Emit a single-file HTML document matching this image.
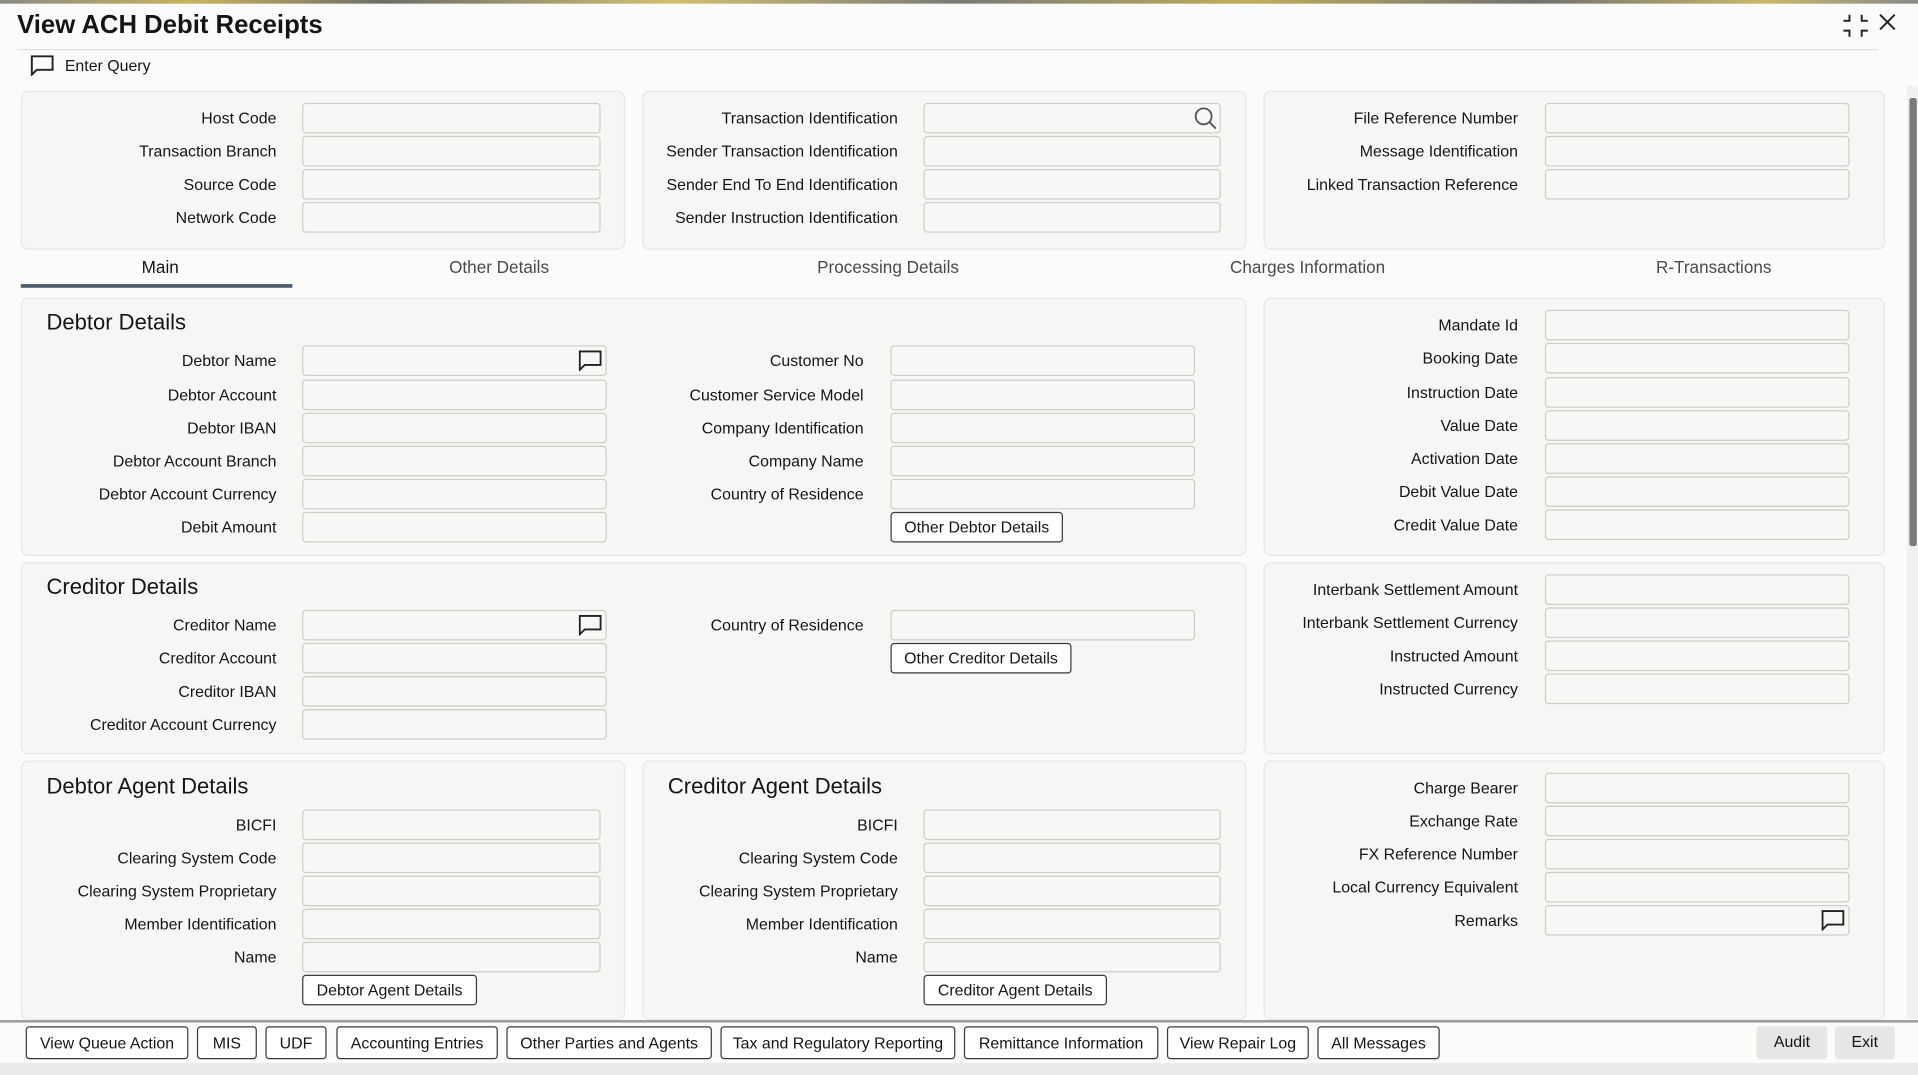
<!DOCTYPE html>
<html><head><meta charset="utf-8"><style>
html,body{margin:0;padding:0;width:1918px;height:1074px;overflow:hidden;background:#fbfbfa;}
#w{position:absolute;left:0;top:0;width:1568px;height:878px;transform:scale(1.2232,1.2246);transform-origin:0 0;font-family:"Liberation Sans Narrow","Liberation Sans",sans-serif;color:#161513;}
#w div{position:absolute;box-sizing:border-box;}
.p{background:#f7f6f4;border:1px solid #e9e7e3;border-radius:6px;}
.l{font-size:13px;text-align:right;width:300px;line-height:16px;}
.i{height:25px;border:1px solid #cfccc7;border-radius:3px;background:#f8f7f5;}
.h{font-size:18px;line-height:22px;}
.b{height:25px;border:1px solid #3a3a3a;border-radius:3px;background:#fff;font-size:13px;line-height:23px;text-align:center;}
.t{font-size:14px;line-height:18px;color:#4a4a48;text-align:center;width:200px;}
.fb{top:838px;height:27px;border:1px solid #3a3a3a;border-radius:3px;background:#fff;font-size:13px;line-height:25px;text-align:center;}
</style></head><body><div id="w">
<div style="left:0;top:0;width:1568px;height:3px;background:linear-gradient(90deg,#8a8a86,#c9b35a 10%,#6d6d69 20%,#d0c070 35%,#7a7a76 50%,#bfae5a 65%,#707070 80%,#c8b868 92%,#888)"></div>
<div style="left:14px;top:8px;font-size:21px;font-weight:bold;line-height:26px;">View ACH Debit Receipts</div>
<div style="left:1506px;top:11px;width:22px;height:20px;"><svg width="22" height="20" viewBox="0 0 22 20" fill="none" stroke="#222" stroke-width="1.6"><path d="M6 1v5H1M16 1v5h5M6 19v-5H1M16 19v-5h5"/></svg></div>
<div style="left:1536px;top:11px;"><svg width="14" height="14" viewBox="0 0 14 14" stroke="#222" stroke-width="1.6"><path d="M1 1L13 13M13 1L1 13"/></svg></div>
<div style="left:14px;top:40px;width:1521px;height:1px;background:#e2e0dc"></div>
<div style="left:25px;top:45px;"><svg width="19" height="17" viewBox="0 0 19 17" fill="none" stroke="#222" stroke-width="1.6"><path d="M1 1h17v11H5l-4 4z"/></svg></div>
<div style="left:53px;top:46px;font-size:13px;line-height:16px;">Enter Query</div>

<div class="p" style="left:17px;top:74px;width:494px;height:130px"></div>
<div class="p" style="left:525px;top:74px;width:494px;height:130px"></div>
<div class="p" style="left:1033px;top:74px;width:508px;height:130px"></div>

<div class="l" style="left:-74px;top:89px">Host Code</div><div class="i" style="left:247px;top:84px;width:244px"></div>
<div class="l" style="left:-74px;top:116px">Transaction Branch</div><div class="i" style="left:247px;top:111px;width:244px"></div>
<div class="l" style="left:-74px;top:143px">Source Code</div><div class="i" style="left:247px;top:138px;width:244px"></div>
<div class="l" style="left:-74px;top:170px">Network Code</div><div class="i" style="left:247px;top:165px;width:244px"></div>

<div class="l" style="left:434px;top:89px">Transaction Identification</div><div class="i" style="left:755px;top:84px;width:243px"></div>
<div style="left:976px;top:87px"><svg width="19" height="19" viewBox="0 0 19 19" fill="none" stroke="#555" stroke-width="1.5"><circle cx="8" cy="8" r="6.5"/><path d="M13 13l5 5"/></svg></div>
<div class="l" style="left:434px;top:116px">Sender Transaction Identification</div><div class="i" style="left:755px;top:111px;width:243px"></div>
<div class="l" style="left:434px;top:143px">Sender End To End Identification</div><div class="i" style="left:755px;top:138px;width:243px"></div>
<div class="l" style="left:434px;top:170px">Sender Instruction Identification</div><div class="i" style="left:755px;top:165px;width:243px"></div>

<div class="l" style="left:941px;top:89px">File Reference Number</div><div class="i" style="left:1263px;top:84px;width:249px"></div>
<div class="l" style="left:941px;top:116px">Message Identification</div><div class="i" style="left:1263px;top:111px;width:249px"></div>
<div class="l" style="left:941px;top:143px">Linked Transaction Reference</div><div class="i" style="left:1263px;top:138px;width:249px"></div>

<div class="t" style="left:31px;top:209px;color:#161513">Main</div>
<div class="t" style="left:308px;top:209px">Other Details</div>
<div class="t" style="left:626px;top:209px">Processing Details</div>
<div class="t" style="left:969px;top:209px">Charges Information</div>
<div class="t" style="left:1301px;top:209px">R-Transactions</div>
<div style="left:17px;top:232px;width:222px;height:3px;background:#4d5a6c"></div>

<div class="p" style="left:17px;top:243px;width:1002px;height:211px"></div>
<div class="p" style="left:1033px;top:243px;width:508px;height:211px"></div>
<div class="h" style="left:38px;top:252px">Debtor Details</div>
<div class="l" style="left:-74px;top:287px">Debtor Name</div><div class="i" style="left:247px;top:282px;width:249px"></div>
<div style="left:473px;top:286px"><svg width="19" height="17" viewBox="0 0 19 17" fill="none" stroke="#222" stroke-width="1.5"><path d="M1 1h17v11H5l-4 4z"/></svg></div>
<div class="l" style="left:-74px;top:315px">Debtor Account</div><div class="i" style="left:247px;top:310px;width:249px"></div>
<div class="l" style="left:-74px;top:342px">Debtor IBAN</div><div class="i" style="left:247px;top:337px;width:249px"></div>
<div class="l" style="left:-74px;top:369px">Debtor Account Branch</div><div class="i" style="left:247px;top:364px;width:249px"></div>
<div class="l" style="left:-74px;top:396px">Debtor Account Currency</div><div class="i" style="left:247px;top:391px;width:249px"></div>
<div class="l" style="left:-74px;top:423px">Debit Amount</div><div class="i" style="left:247px;top:418px;width:249px"></div>

<div class="l" style="left:406px;top:287px">Customer No</div><div class="i" style="left:728px;top:282px;width:249px"></div>
<div class="l" style="left:406px;top:315px">Customer Service Model</div><div class="i" style="left:728px;top:310px;width:249px"></div>
<div class="l" style="left:406px;top:342px">Company Identification</div><div class="i" style="left:728px;top:337px;width:249px"></div>
<div class="l" style="left:406px;top:369px">Company Name</div><div class="i" style="left:728px;top:364px;width:249px"></div>
<div class="l" style="left:406px;top:396px">Country of Residence</div><div class="i" style="left:728px;top:391px;width:249px"></div>
<div class="b" style="left:728px;top:418px;width:141px">Other Debtor Details</div>

<div class="l" style="left:941px;top:258px">Mandate Id</div><div class="i" style="left:1263px;top:253px;width:249px"></div>
<div class="l" style="left:941px;top:285px">Booking Date</div><div class="i" style="left:1263px;top:280px;width:249px"></div>
<div class="l" style="left:941px;top:313px">Instruction Date</div><div class="i" style="left:1263px;top:308px;width:249px"></div>
<div class="l" style="left:941px;top:340px">Value Date</div><div class="i" style="left:1263px;top:335px;width:249px"></div>
<div class="l" style="left:941px;top:367px">Activation Date</div><div class="i" style="left:1263px;top:362px;width:249px"></div>
<div class="l" style="left:941px;top:394px">Debit Value Date</div><div class="i" style="left:1263px;top:389px;width:249px"></div>
<div class="l" style="left:941px;top:421px">Credit Value Date</div><div class="i" style="left:1263px;top:416px;width:249px"></div>

<div class="p" style="left:17px;top:459px;width:1002px;height:157px"></div>
<div class="p" style="left:1033px;top:459px;width:508px;height:157px"></div>
<div class="h" style="left:38px;top:468px">Creditor Details</div>
<div class="l" style="left:-74px;top:503px">Creditor Name</div><div class="i" style="left:247px;top:498px;width:249px"></div>
<div style="left:473px;top:502px"><svg width="19" height="17" viewBox="0 0 19 17" fill="none" stroke="#222" stroke-width="1.5"><path d="M1 1h17v11H5l-4 4z"/></svg></div>
<div class="l" style="left:-74px;top:530px">Creditor Account</div><div class="i" style="left:247px;top:525px;width:249px"></div>
<div class="l" style="left:-74px;top:557px">Creditor IBAN</div><div class="i" style="left:247px;top:552px;width:249px"></div>
<div class="l" style="left:-74px;top:584px">Creditor Account Currency</div><div class="i" style="left:247px;top:579px;width:249px"></div>
<div class="l" style="left:406px;top:503px">Country of Residence</div><div class="i" style="left:728px;top:498px;width:249px"></div>
<div class="b" style="left:728px;top:525px;width:148px">Other Creditor Details</div>

<div class="l" style="left:941px;top:474px">Interbank Settlement Amount</div><div class="i" style="left:1263px;top:469px;width:249px"></div>
<div class="l" style="left:941px;top:501px">Interbank Settlement Currency</div><div class="i" style="left:1263px;top:496px;width:249px"></div>
<div class="l" style="left:941px;top:528px">Instructed Amount</div><div class="i" style="left:1263px;top:523px;width:249px"></div>
<div class="l" style="left:941px;top:555px">Instructed Currency</div><div class="i" style="left:1263px;top:550px;width:249px"></div>

<div class="p" style="left:17px;top:621px;width:494px;height:212px"></div>
<div class="p" style="left:525px;top:621px;width:494px;height:212px"></div>
<div class="p" style="left:1033px;top:621px;width:508px;height:212px"></div>
<div class="h" style="left:38px;top:631px">Debtor Agent Details</div>
<div class="h" style="left:546px;top:631px">Creditor Agent Details</div>
<div class="l" style="left:-74px;top:666px">BICFI</div><div class="i" style="left:247px;top:661px;width:244px"></div>
<div class="l" style="left:-74px;top:693px">Clearing System Code</div><div class="i" style="left:247px;top:688px;width:244px"></div>
<div class="l" style="left:-74px;top:720px">Clearing System Proprietary</div><div class="i" style="left:247px;top:715px;width:244px"></div>
<div class="l" style="left:-74px;top:747px">Member Identification</div><div class="i" style="left:247px;top:742px;width:244px"></div>
<div class="l" style="left:-74px;top:774px">Name</div><div class="i" style="left:247px;top:769px;width:244px"></div>
<div class="b" style="left:247px;top:796px;width:143px">Debtor Agent Details</div>
<div class="l" style="left:434px;top:666px">BICFI</div><div class="i" style="left:755px;top:661px;width:243px"></div>
<div class="l" style="left:434px;top:693px">Clearing System Code</div><div class="i" style="left:755px;top:688px;width:243px"></div>
<div class="l" style="left:434px;top:720px">Clearing System Proprietary</div><div class="i" style="left:755px;top:715px;width:243px"></div>
<div class="l" style="left:434px;top:747px">Member Identification</div><div class="i" style="left:755px;top:742px;width:243px"></div>
<div class="l" style="left:434px;top:774px">Name</div><div class="i" style="left:755px;top:769px;width:243px"></div>
<div class="b" style="left:755px;top:796px;width:150px">Creditor Agent Details</div>

<div class="l" style="left:941px;top:636px">Charge Bearer</div><div class="i" style="left:1263px;top:631px;width:249px"></div>
<div class="l" style="left:941px;top:663px">Exchange Rate</div><div class="i" style="left:1263px;top:658px;width:249px"></div>
<div class="l" style="left:941px;top:690px">FX Reference Number</div><div class="i" style="left:1263px;top:685px;width:249px"></div>
<div class="l" style="left:941px;top:717px">Local Currency Equivalent</div><div class="i" style="left:1263px;top:712px;width:249px"></div>
<div class="l" style="left:941px;top:744px">Remarks</div><div class="i" style="left:1263px;top:739px;width:249px"></div>
<div style="left:1489px;top:743px"><svg width="19" height="17" viewBox="0 0 19 17" fill="none" stroke="#222" stroke-width="1.5"><path d="M1 1h17v11H5l-4 4z"/></svg></div>

<div style="left:1559px;top:70px;width:9px;height:762px;background:#f0f0f0"></div>
<div style="left:1561px;top:80px;width:6px;height:366px;background:#7a7a7a;border-radius:2px"></div>
<div style="left:0;top:833px;width:1568px;height:2px;background:#9a9a9a"></div>

<div class="fb" style="left:21px;width:133px">View Queue Action</div>
<div class="fb" style="left:161px;width:49px">MIS</div>
<div class="fb" style="left:217px;width:50px">UDF</div>
<div class="fb" style="left:275px;width:132px">Accounting Entries</div>
<div class="fb" style="left:414px;width:168px">Other Parties and Agents</div>
<div class="fb" style="left:589px;width:192px">Tax and Regulatory Reporting</div>
<div class="fb" style="left:788px;width:159px">Remittance Information</div>
<div class="fb" style="left:954px;width:116px">View Repair Log</div>
<div class="fb" style="left:1077px;width:100px">All Messages</div>
<div class="fb" style="left:1436px;width:58px;border:none;background:#e6e6e6">Audit</div>
<div class="fb" style="left:1500px;width:49px;border:none;background:#e6e6e6">Exit</div>
<div style="left:0;top:868px;width:1568px;height:10px;background:#ebebeb"></div>
</div></body></html>
